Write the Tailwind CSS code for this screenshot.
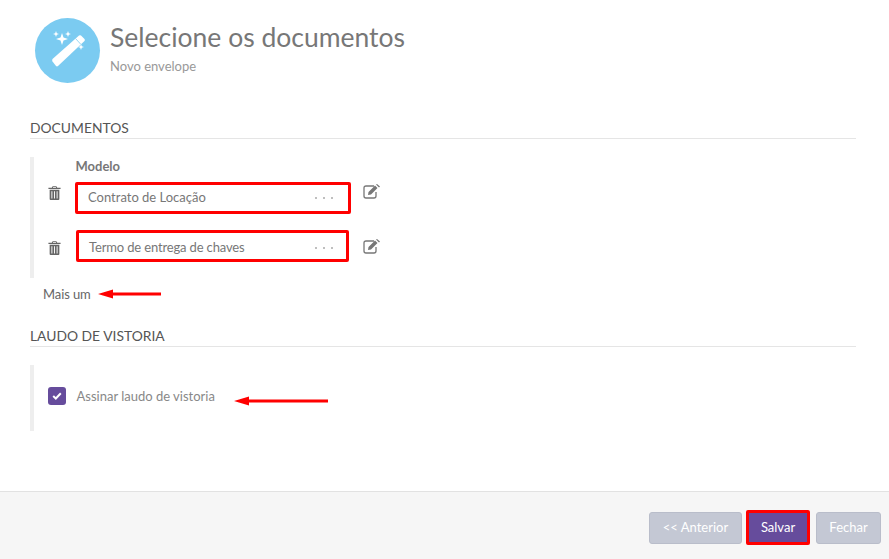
<!DOCTYPE html>
<html lang="en">
<head>
    <meta charset="UTF-8">
    <script src="https://cdn.jsdelivr.net/npm/@tailwindcss/browser@4"></script>
    <title>Selecione os documentos</title>
</head>
<body class="bg-white font-['Lato',sans-serif] relative h-[559px] w-[889px] overflow-hidden flex flex-col">
    <div class="flex-1 pl-[30px] pr-[33px]">
        <!-- header -->
        <div class="flex pt-[18px] pl-[5px] h-[118px]">
            <div class="w-[65px] h-[65px] rounded-full bg-[#7bcbf1] flex items-center justify-center shrink-0">
                <svg width="65" height="65" viewBox="0 0 65 65" fill="#fff">
                    <path d="M17.500 41 L44 17.500 Q45 16.800 46 17.500 L49.500 21 Q50.300 22 49.500 23 L23 48 Q22 48.800 21 48 L17.500 43.500 Q16.800 42.300 17.500 41 Z"/>
                    <path d="M40.500 20.500 L46 26.500" stroke="#7bcbf1" stroke-width="0.800"/>
                    <path d="M27 15 L28.500 19.500 L33 21 L28.500 22.500 L27 27 L25.500 22.500 L21 21 L25.500 19.500 Z"/>
                    <path d="M21 13 L21.800 15.200 L24 16 L21.800 16.800 L21 19 L20.200 16.800 L18 16 L20.200 15.200 Z"/>
                    <path d="M33 13 L33.800 15.200 L36 16 L33.800 16.800 L33 19 L32.200 16.800 L30 16 L32.200 15.200 Z"/>
                    <path d="M46 26 L46.800 28.200 L49 29 L46.800 29.800 L46 32 L45.200 29.800 L43 29 L45.200 28.200 Z"/>
                </svg>
            </div>
            <div class="ml-[10px]">
                <h1 class="text-[26.500px] leading-[38px] text-[#777]">Selecione os documentos</h1>
                <p class="text-[13px] leading-[18px] mt-[1px] text-[#999]">Novo envelope</p>
            </div>
        </div>

        <!-- documentos -->
        <h2 class="text-[13.850px] leading-[20px] text-[#555] border-b border-[#e5e5e5] h-[21px]">DOCUMENTOS</h2>
        <div class="mt-[18px] border-l-4 border-[#eee] h-[121px] flex flex-col">
            <div class="pl-[41.500px] text-[13px] font-bold leading-[18px] text-[#777]">Modelo</div>
            <div class="flex items-start mt-[7px]">
                <svg class="ml-[14px] mt-[4px]" width="13" height="14" viewBox="0 0 13 15" fill="#666">
                    <path fill-rule="evenodd" d="M4.500 0.200 H8.500 L9.500 2 H13 V3.300 H0 V2 H3.500 Z M5 1.200 L4.700 2 H8.300 L8 1.200 Z"/>
                    <path fill-rule="evenodd" d="M1.300 4 H11.700 V14 Q11.700 15 10.700 15 H2.300 Q1.300 15 1.300 14 Z M3.200 5.500 V13.500 H4.200 V5.500 Z M6 5.500 V13.500 H7 V5.500 Z M8.800 5.500 V13.500 H9.800 V5.500 Z"/>
                </svg>
                <div class="ml-[14px] w-[276px] h-[32px] border-[3px] border-[#f00] rounded-[2px] flex items-center justify-between pl-[10px] pr-[15px] text-[13px] text-[#777]">
                    <span>Contrato de Locação</span>
                    <span class="flex gap-[6px]">
                        <i class="w-[2px] h-[2px] rounded-full bg-[#aaa]"></i><i class="w-[2px] h-[2px] rounded-full bg-[#aaa]"></i><i class="w-[2px] h-[2px] rounded-full bg-[#aaa]"></i>
                    </span>
                </div>
                <svg class="ml-[12px] mt-[2px]" width="18" height="15" viewBox="0 0 18 15" fill="none">
                    <path d="M11 2 H3 Q1 2 1 4 V12 Q1 14 3 14 H11 Q13 14 13 12 V8" stroke="#777" stroke-width="1.300"/>
                    <path d="M5.500 8 L12 1.500 L14.500 4 L8 10.500 L5 11 Z M13 0.500 L14 0 L17 2.500 L16 3.500 Z" fill="#777"/>
                </svg>
            </div>
            <div class="flex items-start mt-[16px]">
                <svg class="ml-[14px] mt-[11px]" width="13" height="14" viewBox="0 0 13 15" fill="#666">
                    <path fill-rule="evenodd" d="M4.500 0.200 H8.500 L9.500 2 H13 V3.300 H0 V2 H3.500 Z M5 1.200 L4.700 2 H8.300 L8 1.200 Z"/>
                    <path fill-rule="evenodd" d="M1.300 4 H11.700 V14 Q11.700 15 10.700 15 H2.300 Q1.300 15 1.300 14 Z M3.200 5.500 V13.500 H4.200 V5.500 Z M6 5.500 V13.500 H7 V5.500 Z M8.800 5.500 V13.500 H9.800 V5.500 Z"/>
                </svg>
                <div class="ml-[15px] w-[273px] h-[32px] border-[3px] border-[#f00] rounded-[2px] flex items-center justify-between pl-[10px] pr-[13px] pt-[3px] text-[13px] text-[#777]">
                    <span class="tracking-[-0.150px]">Termo de entrega de chaves</span>
                    <span class="flex gap-[6px]">
                        <i class="w-[2px] h-[2px] rounded-full bg-[#aaa]"></i><i class="w-[2px] h-[2px] rounded-full bg-[#aaa]"></i><i class="w-[2px] h-[2px] rounded-full bg-[#aaa]"></i>
                    </span>
                </div>
                <svg class="ml-[14px] mt-[9px]" width="18" height="15" viewBox="0 0 18 15" fill="none">
                    <path d="M11 2 H3 Q1 2 1 4 V12 Q1 14 3 14 H11 Q13 14 13 12 V8" stroke="#777" stroke-width="1.300"/>
                    <path d="M5.500 8 L12 1.500 L14.500 4 L8 10.500 L5 11 Z M13 0.500 L14 0 L17 2.500 L16 3.500 Z" fill="#777"/>
                </svg>
            </div>
        </div>
        <div class="pl-[13px] mt-[7px] text-[13px] leading-[18px] text-[#666] tracking-[-0.100px]">Mais um</div>

        <!-- laudo -->
        <h2 class="mt-[23px] text-[13.850px] leading-[20px] text-[#555] border-b border-[#e5e5e5] h-[21px]">LAUDO DE VISTORIA</h2>
        <div class="mt-[18px] border-l-4 border-[#eee] h-[66px] flex items-center pl-[14px]">
            <span class="w-[18px] h-[18px] rounded-[3px] bg-[#664c9c] flex items-center justify-center mt-[-5px]">
                <svg width="10" height="8" viewBox="0 0 10 8" fill="none"><path d="M1.200 4 L3.800 6.500 L8.800 1.200" stroke="#fff" stroke-width="2"/></svg>
            </span>
            <span class="ml-[10.500px] text-[13px] text-[#888] mt-[-3px]">Assinar laudo de vistoria</span>
        </div>
    </div>

    <!-- footer -->
    <div class="h-[68px] bg-[#f6f6f6] border-t border-[#e2e2e2] flex items-start justify-end gap-[4px] pt-[20px] pr-[8px]">
        <button class="w-[93px] h-[32px] rounded-[3px] border border-[#b9bdca] bg-[#c4c8d4] text-white text-[13px]">&lt;&lt; Anterior</button>
        <button class="w-[64px] h-[35px] mt-[-2px] border-[3px] border-[#f00] rounded-[2px] bg-[#664c9c] text-white text-[13px]">Salvar</button>
        <button class="w-[65px] h-[32px] ml-[2px] rounded-[3px] border border-[#b9bdca] bg-[#c4c8d4] text-white text-[13px]">Fechar</button>
    </div>

    <!-- annotation arrows -->
    <svg class="absolute left-0 top-0 pointer-events-none" width="889" height="559" fill="#f00">
        <path d="M98 294 L113 289.500 L113 292.500 L161 292.500 L161 295.500 L113 295.500 L113 298.500 Z"/>
        <path d="M234 401 L249 396.500 L249 399.500 L328 399.500 L328 402.500 L249 402.500 L249 405.500 Z"/>
    </svg>
</body>
</html>
